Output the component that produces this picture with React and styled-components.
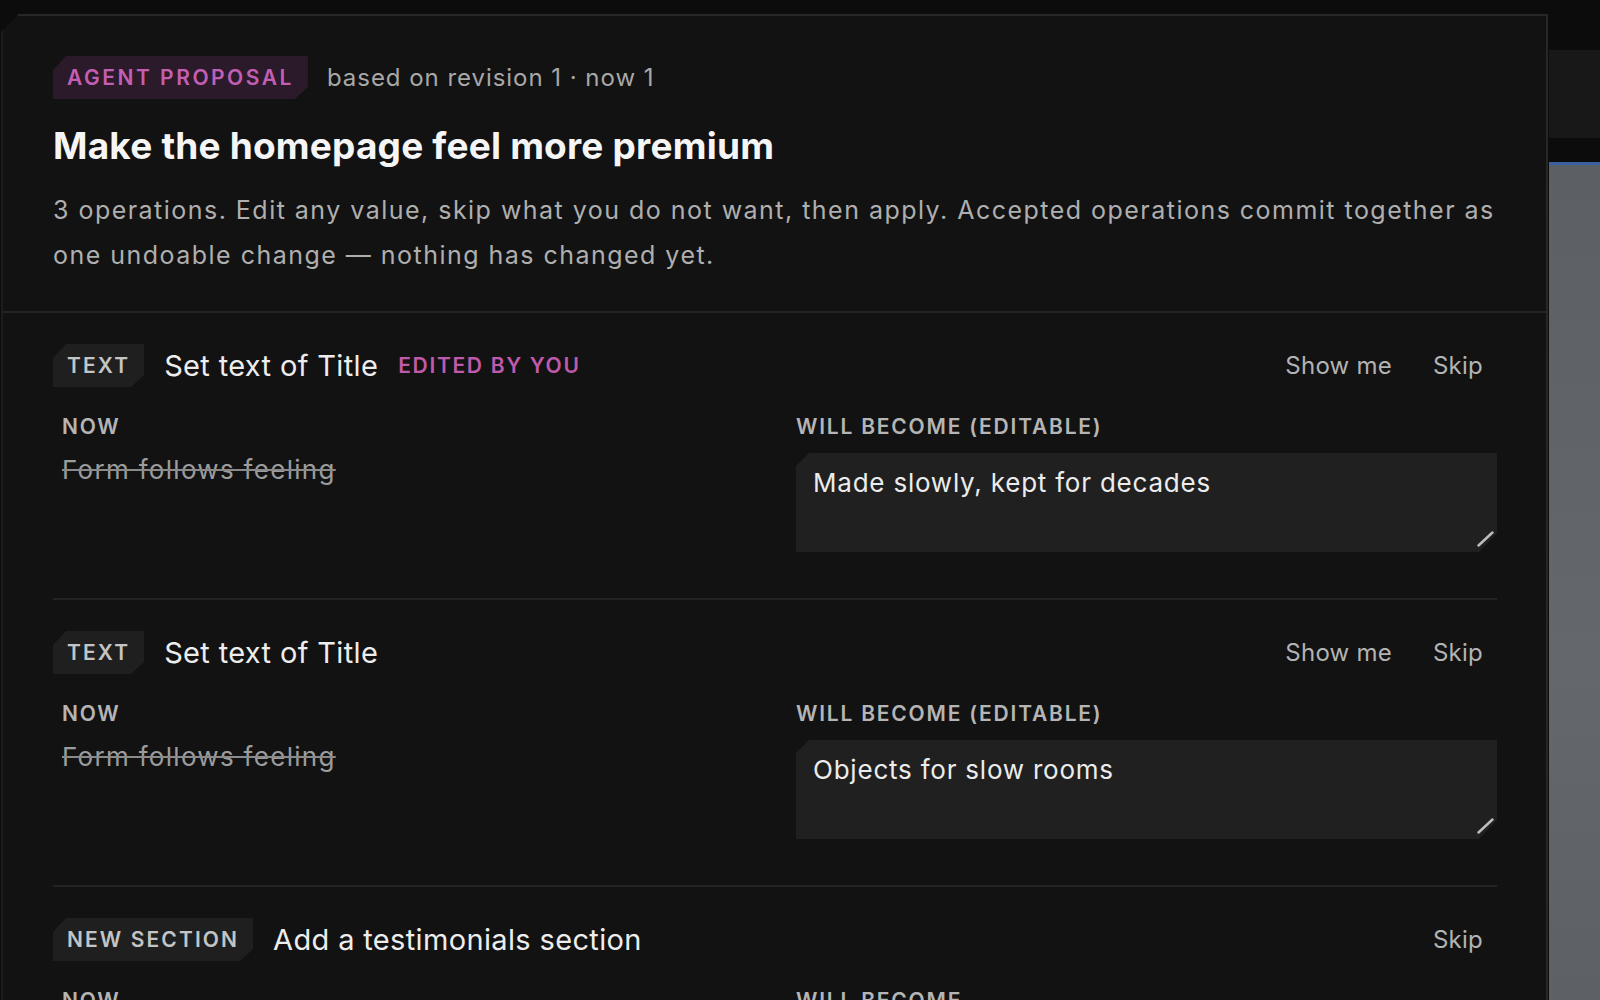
import React from 'react';
import styled, { createGlobalStyle } from 'styled-components';

const GlobalStyle = createGlobalStyle`
  html, body {
    margin: 0;
    padding: 0;
    background: #0c0c0c;
  }
  body {
    font-family: Inter, "Noto Sans", "Liberation Sans", sans-serif;
    -webkit-font-smoothing: antialiased;
  }
`;

const operations = [
  {
    kind: 'TEXT',
    title: 'Set text of Title',
    edited: true,
    showMe: true,
    now: 'Form follows feeling',
    label: 'WILL BECOME (EDITABLE)',
    next: 'Made slowly, kept for decades',
  },
  {
    kind: 'TEXT',
    title: 'Set text of Title',
    edited: false,
    showMe: true,
    now: 'Form follows feeling',
    label: 'WILL BECOME (EDITABLE)',
    next: 'Objects for slow rooms',
  },
  {
    kind: 'NEW SECTION',
    title: 'Add a testimonials section',
    edited: false,
    showMe: false,
    now: 'Not on the page',
    label: 'WILL BECOME',
    next: 'Testimonials',
  },
];

export default function App() {
  return (
    <>
      <GlobalStyle />
      <Page>
        <Panel>
          <Header>
            <MetaRow>
              <Tag tone="agent">AGENT PROPOSAL</Tag>
              <Meta>based on revision 1 · now 1</Meta>
            </MetaRow>
            <Title>Make the homepage feel more premium</Title>
            <Description>
              3 operations. Edit any value, skip what you do not want, then apply. Accepted operations commit together as
              one undoable change — nothing has changed yet.
            </Description>
          </Header>

          <OpList>
            {operations.map((op, i) => (
              <Operation key={i}>
                <OpHead>
                  <Tag>{op.kind}</Tag>
                  <OpTitle>{op.title}</OpTitle>
                  {op.edited && <Edited>EDITED BY YOU</Edited>}
                  <Actions>
                    {op.showMe && <ActionButton>Show me</ActionButton>}
                    <ActionButton>Skip</ActionButton>
                  </Actions>
                </OpHead>
                <Columns>
                  <NowCol>
                    <Label>NOW</Label>
                    <OldValue>{op.now}</OldValue>
                  </NowCol>
                  <div>
                    <Label>{op.label}</Label>
                    <FieldWrap>
                      <Field defaultValue={op.next} spellCheck={false} />
                      <Grip width="17" height="16" viewBox="0 0 17 16">
                        <line x1="1.5" y1="14.5" x2="15.5" y2="1.5" stroke="#bdbdbd" strokeWidth="2.4" strokeLinecap="round" />
                      </Grip>
                    </FieldWrap>
                  </div>
                </Columns>
              </Operation>
            ))}
          </OpList>
        </Panel>

        <Backdrop>
          <BackdropTop />
          <BackdropBar />
          <BackdropGap />
          <BackdropCanvas />
        </Backdrop>
      </Page>
    </>
  );
}

const Page = styled.div`
  display: flex;
  align-items: flex-start;
  height: 100vh;
  overflow: hidden;
`;

const Panel = styled.section`
  flex: none;
  width: 1547px;
  box-sizing: border-box;
  margin: 14px 0 0 1px;
  min-height: 1200px;
  background: #121212;
  border-top: 2px solid #272727;
  border-left: 2px solid #1c1c1c;
  border-right: 2px solid #272727;
  clip-path: polygon(18px 0, 100% 0, 100% 100%, 0 100%, 0 18px);
`;

const Header = styled.header`
  padding: 40px 49px 33px 50px;
  border-bottom: 2px solid #242424;
`;

const MetaRow = styled.div`
  display: flex;
  align-items: center;
  gap: 19px;
`;

const Tag = styled.span`
  display: inline-flex;
  align-items: center;
  flex: none;
  height: 43px;
  padding: 0 14px;
  font-size: 21px;
  font-weight: 600;
  letter-spacing: ${(p) => (p.tone === 'agent' ? '0.12em' : '0.1em')};
  color: ${(p) => (p.tone === 'agent' ? '#c35fb3' : '#c4c4c4')};
  background: ${(p) => (p.tone === 'agent' ? '#2b1a29' : '#1f1f1f')};
  clip-path: polygon(13px 0, 100% 0, 100% calc(100% - 12px), calc(100% - 13px) 100%, 0 100%, 0 14px);
`;

const Meta = styled.span`
  font-size: 24px;
  color: #a8a8a8;
  letter-spacing: 0.04em;
`;

const Title = styled.h1`
  margin: 25px 0 0;
  font-size: 37px;
  line-height: 44px;
  font-weight: 700;
  letter-spacing: 0.2px;
  color: #f5f5f5;
`;

const Description = styled.p`
  margin: 20px 0 0;
  font-size: 25px;
  line-height: 45px;
  letter-spacing: 0.059em;
  color: #afafaf;
`;

const OpList = styled.div`
  padding: 0 49px 0 50px;
`;

const Operation = styled.article`
  padding: 31px 0 46px;
  border-bottom: 2px solid #232323;
`;

const OpHead = styled.div`
  display: flex;
  align-items: center;
  gap: 20px;
`;

const OpTitle = styled.span`
  font-size: 29px;
  letter-spacing: 0.012em;
  color: #ededed;
`;

const Edited = styled.span`
  font-size: 21px;
  font-weight: 600;
  letter-spacing: 0.08em;
  color: #bf5aab;
`;

const Actions = styled.div`
  margin-left: auto;
  display: flex;
  gap: 13px;
`;

const ActionButton = styled.button`
  padding: 4px 14px;
  border: none;
  background: none;
  font-family: inherit;
  font-size: 24px;
  letter-spacing: 0.01em;
  color: #b3b3b3;
  cursor: pointer;
`;

const Columns = styled.div`
  display: grid;
  grid-template-columns: 1fr 1fr;
  gap: 42px;
  margin-top: 27px;
`;

const NowCol = styled.div`
  padding-left: 9px;
`;

const Label = styled.div`
  font-size: 21px;
  line-height: 26px;
  font-weight: 600;
  letter-spacing: 0.085em;
  color: #b5b5b5;
  margin-bottom: 13px;
`;

const OldValue = styled.div`
  font-size: 26px;
  line-height: 34px;
  letter-spacing: 0.05em;
  color: #9c9c9c;
  text-decoration: line-through;
  text-decoration-color: #8a8a8a;
`;

const FieldWrap = styled.div`
  position: relative;
`;

const Field = styled.textarea`
  display: block;
  width: 100%;
  height: 99px;
  box-sizing: border-box;
  padding: 13px 17px;
  border: none;
  outline: none;
  resize: none;
  background: #202020;
  font-family: inherit;
  font-size: 26px;
  line-height: 34px;
  letter-spacing: 0.03em;
  color: #ececec;
  clip-path: polygon(13px 0, 100% 0, 100% calc(100% - 19px), calc(100% - 18px) 100%, 0 100%, 0 13px);
`;

const Grip = styled.svg`
  position: absolute;
  right: 3px;
  bottom: 5px;
  pointer-events: none;
`;

const Backdrop = styled.div`
  flex: 1;
  align-self: stretch;
  display: flex;
  flex-direction: column;
  padding-left: 1px;
`;

const BackdropTop = styled.div`
  height: 50px;
`;

const BackdropBar = styled.div`
  height: 88px;
  background: #181818;
`;

const BackdropGap = styled.div`
  height: 24px;
  border-bottom: 3px solid #3b60a3;
`;

const BackdropCanvas = styled.div`
  flex: 1;
  background: linear-gradient(180deg, #5c5f63 0%, #64676b 60%, #5d6064 100%);
`;
